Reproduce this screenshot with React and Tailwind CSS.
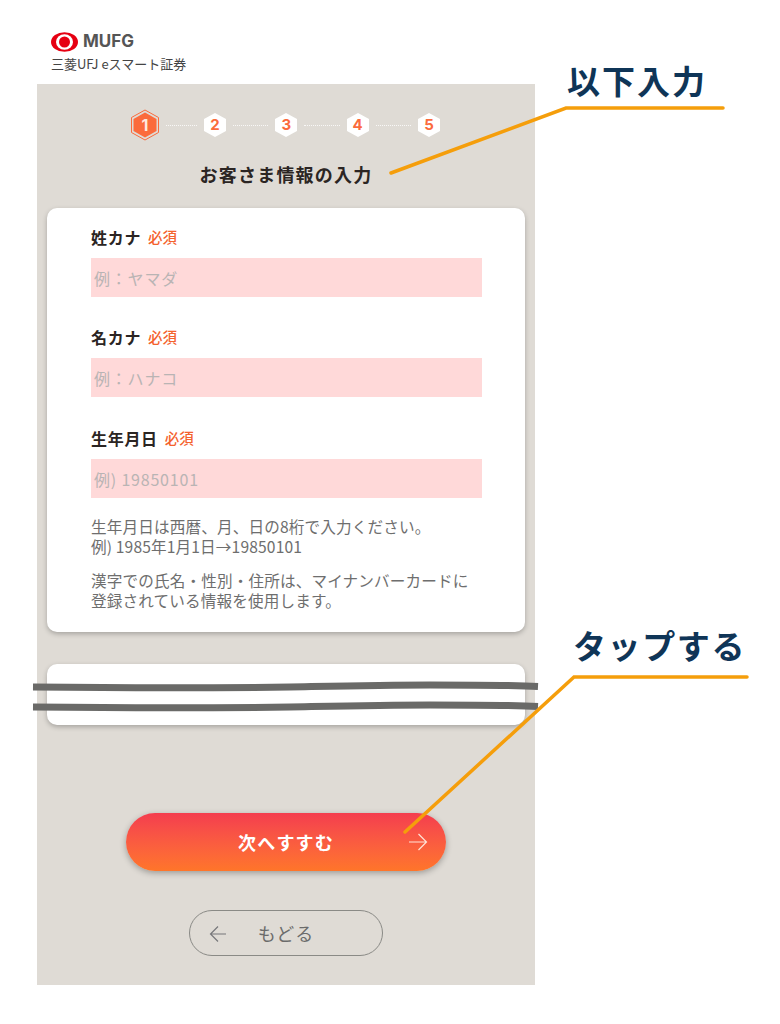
import React from 'react';

const font = { fontFamily: '"Noto Sans CJK JP", "Noto Sans", sans-serif' };

function Hex({ n, active }) {
  if (active) {
    return (
      <div className="relative w-[30px] h-[32px] flex items-center justify-center">
        <svg className="absolute inset-0" width="30" height="32" viewBox="0 0 30 32">
          <polygon points="15,1 28.5,8.5 28.5,23.5 15,31 1.500,23.5 1.500,8.5" fill="none" stroke="#fb6b3c" strokeWidth="1" />
          <polygon points="15,3.500 26.500,10 26.500,22 15,28.500 3.500,22 3.500,10" fill="#fb6b3c" />
        </svg>
        <span className="relative text-[16px] font-bold text-[#ffe9df] [font-family:Inter,sans-serif]">{n}</span>
      </div>
    );
  }
  return (
    <div className="relative w-[24px] h-[26px] flex items-center justify-center">
      <svg className="absolute inset-0" width="24" height="26" viewBox="0 0 24 26">
        <polygon points="12,1 23,7 23,19 12,25 1,19 1,7" fill="#ffffff" />
      </svg>
      <span className="relative text-[15px] font-bold text-[#fb6b3c] [font-family:Inter,sans-serif]">{n}</span>
    </div>
  );
}

function Dots({ first }) {
  return <div className={first ? 'w-[31px] border-t-[1.5px] border-dotted border-white/80' : 'w-[35.330px] border-t-[1.5px] border-dotted border-white/80'} />;
}

function Field({ label, placeholder, className }) {
  return (
    <div className={className}>
      <div className="flex items-center h-[20px] gap-[7px]">
        <span className="text-[16px] font-bold text-[#2b2523] tracking-[0.7px]">{label}</span>
        <span className="text-[14.500px] font-medium text-[#f4622d]">必須</span>
      </div>
      <div className="mt-[11px] h-[39px] bg-[#ffd9d9] flex items-center pl-[3px] text-[16px] text-[#b9b4b4] tracking-[0.8px]">
        {placeholder}
      </div>
    </div>
  );
}

export default function App() {
  return (
    <div className="relative w-[780px] h-[1024px] bg-white overflow-hidden" style={font}>
      <div className="h-[84px] pl-[51px] pt-[31px]">
        <div className="flex items-center gap-[5px] h-[21px]">
          <svg width="27" height="20" viewBox="0 0 27 20">
            <ellipse cx="13.500" cy="10" rx="13.500" ry="9.800" fill="#e60012" />
            <ellipse cx="13.500" cy="10" rx="8.500" ry="7.800" fill="#ffffff" />
            <circle cx="13.500" cy="10" r="5.500" fill="#e60012" />
          </svg>
          <span className="text-[17px] font-bold text-[#555555] leading-none [font-family:Inter,sans-serif]">MUFG</span>
        </div>
        <div className="mt-[3px] text-[13px] leading-[18px] text-[#444444] whitespace-nowrap">三菱UFJ eスマート証券</div>
      </div>

      <div className="ml-[37px] w-[498px] h-[901px] bg-[#dfdbd5] pt-[25px]">
        <div className="flex items-center justify-center gap-[6px] h-[32px] pr-[1px]">
          <Hex n="1" active />
          <Dots first />
          <Hex n="2" />
          <Dots />
          <Hex n="3" />
          <Dots />
          <Hex n="4" />
          <Dots />
          <Hex n="5" />
        </div>
        <h1 className="mt-[20px] text-center text-[18px] leading-[26px] font-bold text-[#2b2523] tracking-[1.200px]">お客さま情報の入力</h1>

        <div className="mx-[10px] mt-[21px] h-[424px] bg-white rounded-[10px] shadow-[0_2px_5px_rgba(0,0,0,0.25)] pt-[19px] pl-[44px] pr-[43px]">
          <Field label="姓カナ" placeholder="例：ヤマダ" />
          <Field label="名カナ" placeholder="例：ハナコ" className="mt-[30px]" />
          <Field label="生年月日" placeholder="例) 19850101" className="mt-[31px]" />
          <div className="mt-[18px] text-[15.600px] leading-[20px] tracking-[0.150px] text-[#6e6e6e] whitespace-nowrap">
            <p>生年月日は西暦、月、日の8桁で入力ください。</p>
            <p>例) 1985年1月1日→19850101</p>
            <p className="mt-[14px]">漢字での氏名・性別・住所は、マイナンバーカードに</p>
            <p>登録されている情報を使用します。</p>
          </div>
        </div>

        <div className="mx-[10px] mt-[32px] h-[61px] bg-white rounded-[10px] shadow-[0_2px_5px_rgba(0,0,0,0.25)]" />

        <div className="ml-[89px] w-[320px] mt-[88px] h-[58px] rounded-full bg-gradient-to-b from-[#f43c4e] to-[#ff7529] shadow-[0_2px_6px_rgba(0,0,0,0.3)] relative flex items-center justify-center text-white text-[18px] font-bold tracking-[1.200px]">
          次へすすむ
          <svg className="absolute right-[18px] top-[20px]" width="20" height="18" viewBox="0 0 20 18" fill="none" stroke="#ffe3d6" strokeWidth="1.200">
            <path d="M1 9H18.500M10.500 1L18.500 9L10.500 17" />
          </svg>
        </div>

        <div className="ml-[152px] mt-[39px] w-[194px] h-[46px] rounded-full border border-[#8a8a86] relative flex items-center justify-center text-[#6b6b6b] text-[18px] tracking-[1px]">
          もどる
          <svg className="absolute left-[19px] top-[14px]" width="18" height="18" viewBox="0 0 18 18" fill="none" stroke="#77777a" strokeWidth="1.200">
            <path d="M17 9H1.500M9 1.500L1.500 9L9 16.500" />
          </svg>
        </div>
      </div>

      {/* hand-drawn annotations on top of the screenshot */}
      <svg className="absolute inset-0 pointer-events-none" width="780" height="1024" viewBox="0 0 780 1024" fill="none">
        <path d="M33 687C120 688 220 688 290 687C340 686 380 685 430 685C470 685 510 685 538 686.500" stroke="#6a6a68" strokeWidth="7" />
        <path d="M33 707C120 708 220 708 290 707C340 706 380 705 430 705C470 705 510 705 538 706.500" stroke="#6a6a68" strokeWidth="7" />
        <g stroke="#f59e0b" strokeWidth="3.500" strokeLinecap="round">
          <path d="M391 173L566 108H723" />
          <path d="M405 832L574 677H747" />
        </g>
      </svg>
      <div className="absolute left-[567px] top-[56px] text-[33px] leading-[48px] font-bold text-[#0f3557] tracking-[2px] whitespace-nowrap">以下入力</div>
      <div className="absolute left-[573px] top-[621px] text-[33px] leading-[48px] font-bold text-[#0f3557] tracking-[1.600px] whitespace-nowrap">タップする</div>
    </div>
  );
}
